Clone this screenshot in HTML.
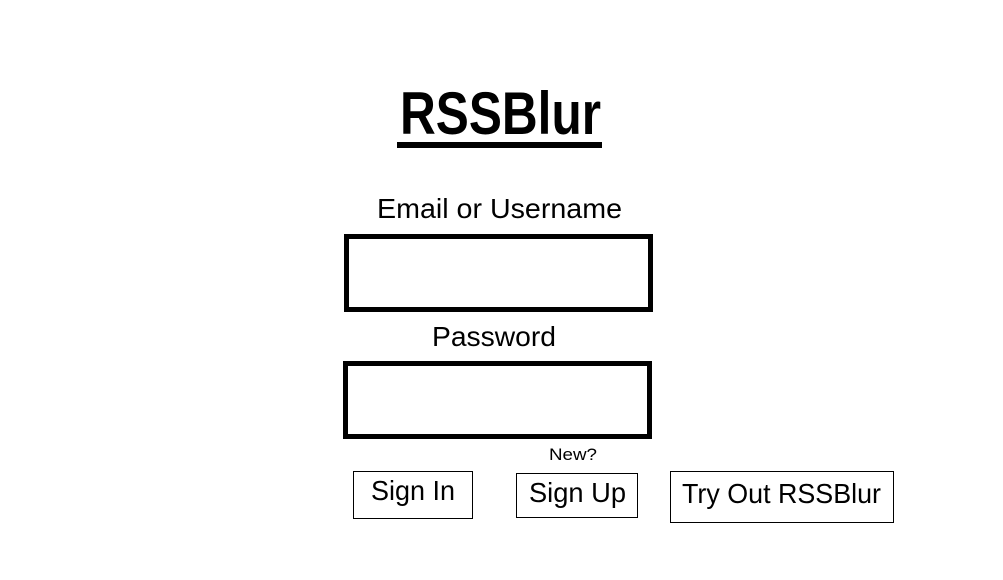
<!DOCTYPE html>
<html><head><style>html,body{margin:0;padding:0;background:#fff;width:1003px;height:580px;overflow:hidden}</style></head>
<body>
<svg width="1003" height="580" xmlns="http://www.w3.org/2000/svg" style="display:block">
<g font-family="Liberation Sans, sans-serif" fill="#000">
<text x="400" y="134" font-size="60" font-weight="bold" textLength="201" lengthAdjust="spacingAndGlyphs">RSSBlur</text>
<rect x="397" y="142" width="205" height="6"/>
<text x="377" y="218" font-size="28" textLength="245" lengthAdjust="spacingAndGlyphs">Email or Username</text>
<text x="432" y="346" font-size="28" textLength="124" lengthAdjust="spacingAndGlyphs">Password</text>
<text x="549" y="460" font-size="17" textLength="48" lengthAdjust="spacingAndGlyphs">New?</text>
<text x="371" y="500" font-size="28" textLength="84" lengthAdjust="spacingAndGlyphs">Sign In</text>
<text x="529" y="502" font-size="28" textLength="97" lengthAdjust="spacingAndGlyphs">Sign Up</text>
<text x="682" y="503" font-size="28" textLength="199" lengthAdjust="spacingAndGlyphs">Try Out RSSBlur</text>
</g>
<g fill="none" stroke="#000">
<rect x="346.5" y="236.5" width="304" height="73" stroke-width="5"/>
<rect x="345.5" y="363.5" width="304" height="73" stroke-width="5"/>
<rect x="353.5" y="471.5" width="119" height="47" stroke-width="1"/>
<rect x="516.5" y="473.5" width="121" height="44" stroke-width="1"/>
<rect x="670.5" y="471.5" width="223" height="51" stroke-width="1"/>
</g>
</svg>
</body></html>
